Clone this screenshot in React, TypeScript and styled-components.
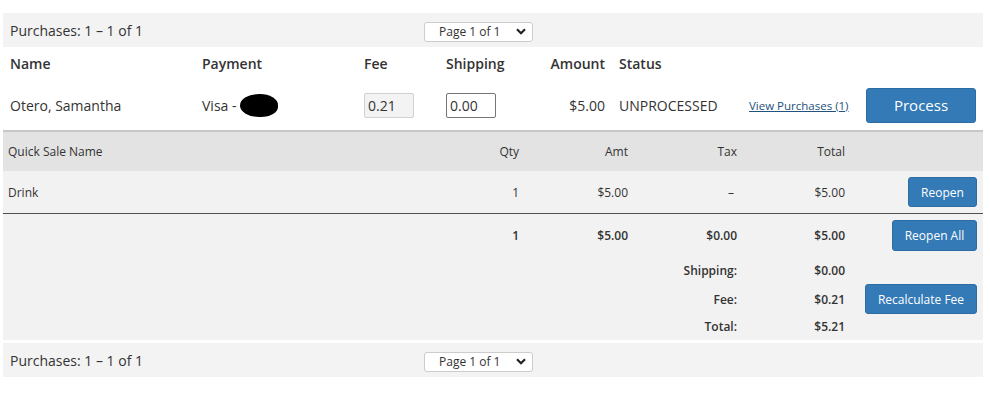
import React from "react";
import styled, { createGlobalStyle } from "styled-components";

const GlobalStyle = createGlobalStyle`
  body {
    margin: 0;
    background: #fff;
    font-family: "Open Sans", "Liberation Sans", sans-serif;
    color: #333;
  }
`;

const Page = styled.div`
  width: 980px;
  padding: 13px 0 0 3px;
`;

const PagerBar = styled.div`
  height: 34px;
  background: #f3f3f3;
  display: grid;
  grid-template-columns: 421px 109px 1fr;
  align-items: center;
  font-size: 14px;

  & > span {
    padding-left: 7px;
  }
`;

const SelectWrap = styled.div`
  position: relative;
  height: 20px;
  margin-top: 2px;
`;

const PageSelect = styled.select`
  appearance: none;
  width: 109px;
  height: 20px;
  border: 1px solid #ccc;
  border-radius: 3px;
  background: #fff;
  font-family: inherit;
  font-size: 12px;
  color: #333;
  padding: 0 0 0 14px;
  outline: none;
`;

const Chevron = styled.svg`
  position: absolute;
  right: 7px;
  top: 7px;
  pointer-events: none;
`;

const PurchaseGrid = styled.div`
  display: grid;
  grid-template-columns: 192px 162px 82px 82px 91px 130px 117px 110px;
  padding-left: 7px;
  align-items: center;
`;

const HeadCell = styled.div<{ $right?: boolean }>`
  height: 33px;
  display: flex;
  align-items: center;
  justify-content: ${(p) => (p.$right ? "flex-end" : "flex-start")};
  padding-right: ${(p) => (p.$right ? "14px" : "0")};
  font-size: 14px;
  font-weight: 600;
`;

const DataCell = styled.div<{ $right?: boolean }>`
  height: 50px;
  display: flex;
  align-items: center;
  justify-content: ${(p) => (p.$right ? "flex-end" : "flex-start")};
  padding-right: ${(p) => (p.$right ? "14px" : "0")};
  font-size: 14px;
`;

const Redacted = styled.span`
  display: inline-block;
  width: 38px;
  height: 23px;
  margin-left: 4px;
  background: #000;
  border-radius: 50% 48% 45% 50%;
`;

const TextInput = styled.input<{ $disabled?: boolean }>`
  width: 50px;
  height: 25px;
  box-sizing: border-box;
  padding: 0 3px;
  font-family: inherit;
  font-size: 14px;
  color: #333;
  border: 1px solid ${(p) => (p.$disabled ? "#d0d0d0" : "#767676")};
  background: ${(p) => (p.$disabled ? "#f3f3f3" : "#fff")};
  border-radius: 2px;
  outline: none;
`;

const LinkText = styled.a`
  font-size: 11.5px;
  color: #23527c;
  text-decoration: underline;
  cursor: pointer;
`;

const Button = styled.button<{ $w: number; $h: number; $size?: number }>`
  width: ${(p) => p.$w}px;
  height: ${(p) => p.$h}px;
  background: #337ab7;
  border: 1px solid #2e6da4;
  border-radius: 3px;
  color: #fff;
  font-family: inherit;
  font-size: ${(p) => p.$size ?? 12}px;
  padding: 0;
  cursor: pointer;
`;

const Items = styled.div`
  background: #f2f2f2;
  border-top: 2px solid #c8c8c8;
`;

const ItemRow = styled.div<{ $h: number; $bg?: string; $line?: boolean; $bold?: boolean }>`
  display: grid;
  grid-template-columns: 1fr 54px 109px 109px 108px 133px;
  height: ${(p) => p.$h}px;
  align-items: center;
  background: ${(p) => p.$bg ?? "transparent"};
  border-bottom: ${(p) => (p.$line ? "1px solid #505050" : "none")};
  font-size: 12px;
  font-weight: ${(p) => (p.$bold ? 600 : 400)};
`;

const Cell = styled.div<{ $align?: string }>`
  display: flex;
  align-items: center;
  justify-content: ${(p) => p.$align ?? "flex-end"};
  padding: 0 5px;
`;

const Dash = styled.span`
  margin-right: 3px;
`;

const ActionCell = styled.div`
  display: flex;
  justify-content: flex-end;
  padding-right: 6px;
`;

const Gap = styled.div`
  height: 3px;
`;

function Pager() {
  return (
    <>
      <span>Purchases: 1 – 1 of 1</span>
      <SelectWrap>
        <PageSelect defaultValue="1">
          <option value="1">Page 1 of 1</option>
        </PageSelect>
        <Chevron width="10" height="7" viewBox="0 0 10 7">
          <path d="M1 1.2 L5 5.2 L9 1.2" fill="none" stroke="#222" strokeWidth="2.2" />
        </Chevron>
      </SelectWrap>
      <div />
    </>
  );
}

export default function App() {
  return (
    <Page>
      <GlobalStyle />
      <PagerBar>
        <Pager />
      </PagerBar>

      <PurchaseGrid>
        <HeadCell>Name</HeadCell>
        <HeadCell>Payment</HeadCell>
        <HeadCell>Fee</HeadCell>
        <HeadCell>Shipping</HeadCell>
        <HeadCell $right>Amount</HeadCell>
        <HeadCell>Status</HeadCell>
        <HeadCell />
        <HeadCell />

        <DataCell>Otero, Samantha</DataCell>
        <DataCell>
          Visa -<Redacted />
        </DataCell>
        <DataCell>
          <TextInput $disabled readOnly value="0.21" />
        </DataCell>
        <DataCell>
          <TextInput defaultValue="0.00" />
        </DataCell>
        <DataCell $right>$5.00</DataCell>
        <DataCell>UNPROCESSED</DataCell>
        <DataCell>
          <LinkText>View Purchases (1)</LinkText>
        </DataCell>
        <DataCell>
          <Button $w={110} $h={35} $size={15}>Process</Button>
        </DataCell>
      </PurchaseGrid>

      <Items>
        <ItemRow $h={39} $bg="#e3e3e3">
          <Cell $align="flex-start">Quick Sale Name</Cell>
          <Cell>Qty</Cell>
          <Cell>Amt</Cell>
          <Cell>Tax</Cell>
          <Cell>Total</Cell>
          <div />
        </ItemRow>
        <ItemRow $h={42} $line>
          <Cell $align="flex-start">Drink</Cell>
          <Cell>1</Cell>
          <Cell>$5.00</Cell>
          <Cell>
            <Dash>–</Dash>
          </Cell>
          <Cell>$5.00</Cell>
          <ActionCell>
            <Button $w={69} $h={30}>Reopen</Button>
          </ActionCell>
        </ItemRow>
        <ItemRow $h={42} $bold>
          <div />
          <Cell>1</Cell>
          <Cell>$5.00</Cell>
          <Cell>$0.00</Cell>
          <Cell>$5.00</Cell>
          <ActionCell>
            <Button $w={85} $h={31}>Reopen All</Button>
          </ActionCell>
        </ItemRow>
        <ItemRow $h={28} $bold>
          <div />
          <div />
          <div />
          <Cell>Shipping:</Cell>
          <Cell>$0.00</Cell>
          <div />
        </ItemRow>
        <ItemRow $h={28} $bold>
          <div />
          <div />
          <div />
          <Cell>Fee:</Cell>
          <Cell>$0.21</Cell>
          <ActionCell>
            <Button $w={112} $h={30}>Recalculate Fee</Button>
          </ActionCell>
        </ItemRow>
        <ItemRow $h={28} $bold>
          <div />
          <div />
          <div />
          <Cell>Total:</Cell>
          <Cell>$5.21</Cell>
          <div />
        </ItemRow>
      </Items>

      <Gap />
      <PagerBar>
        <Pager />
      </PagerBar>
    </Page>
  );
}
